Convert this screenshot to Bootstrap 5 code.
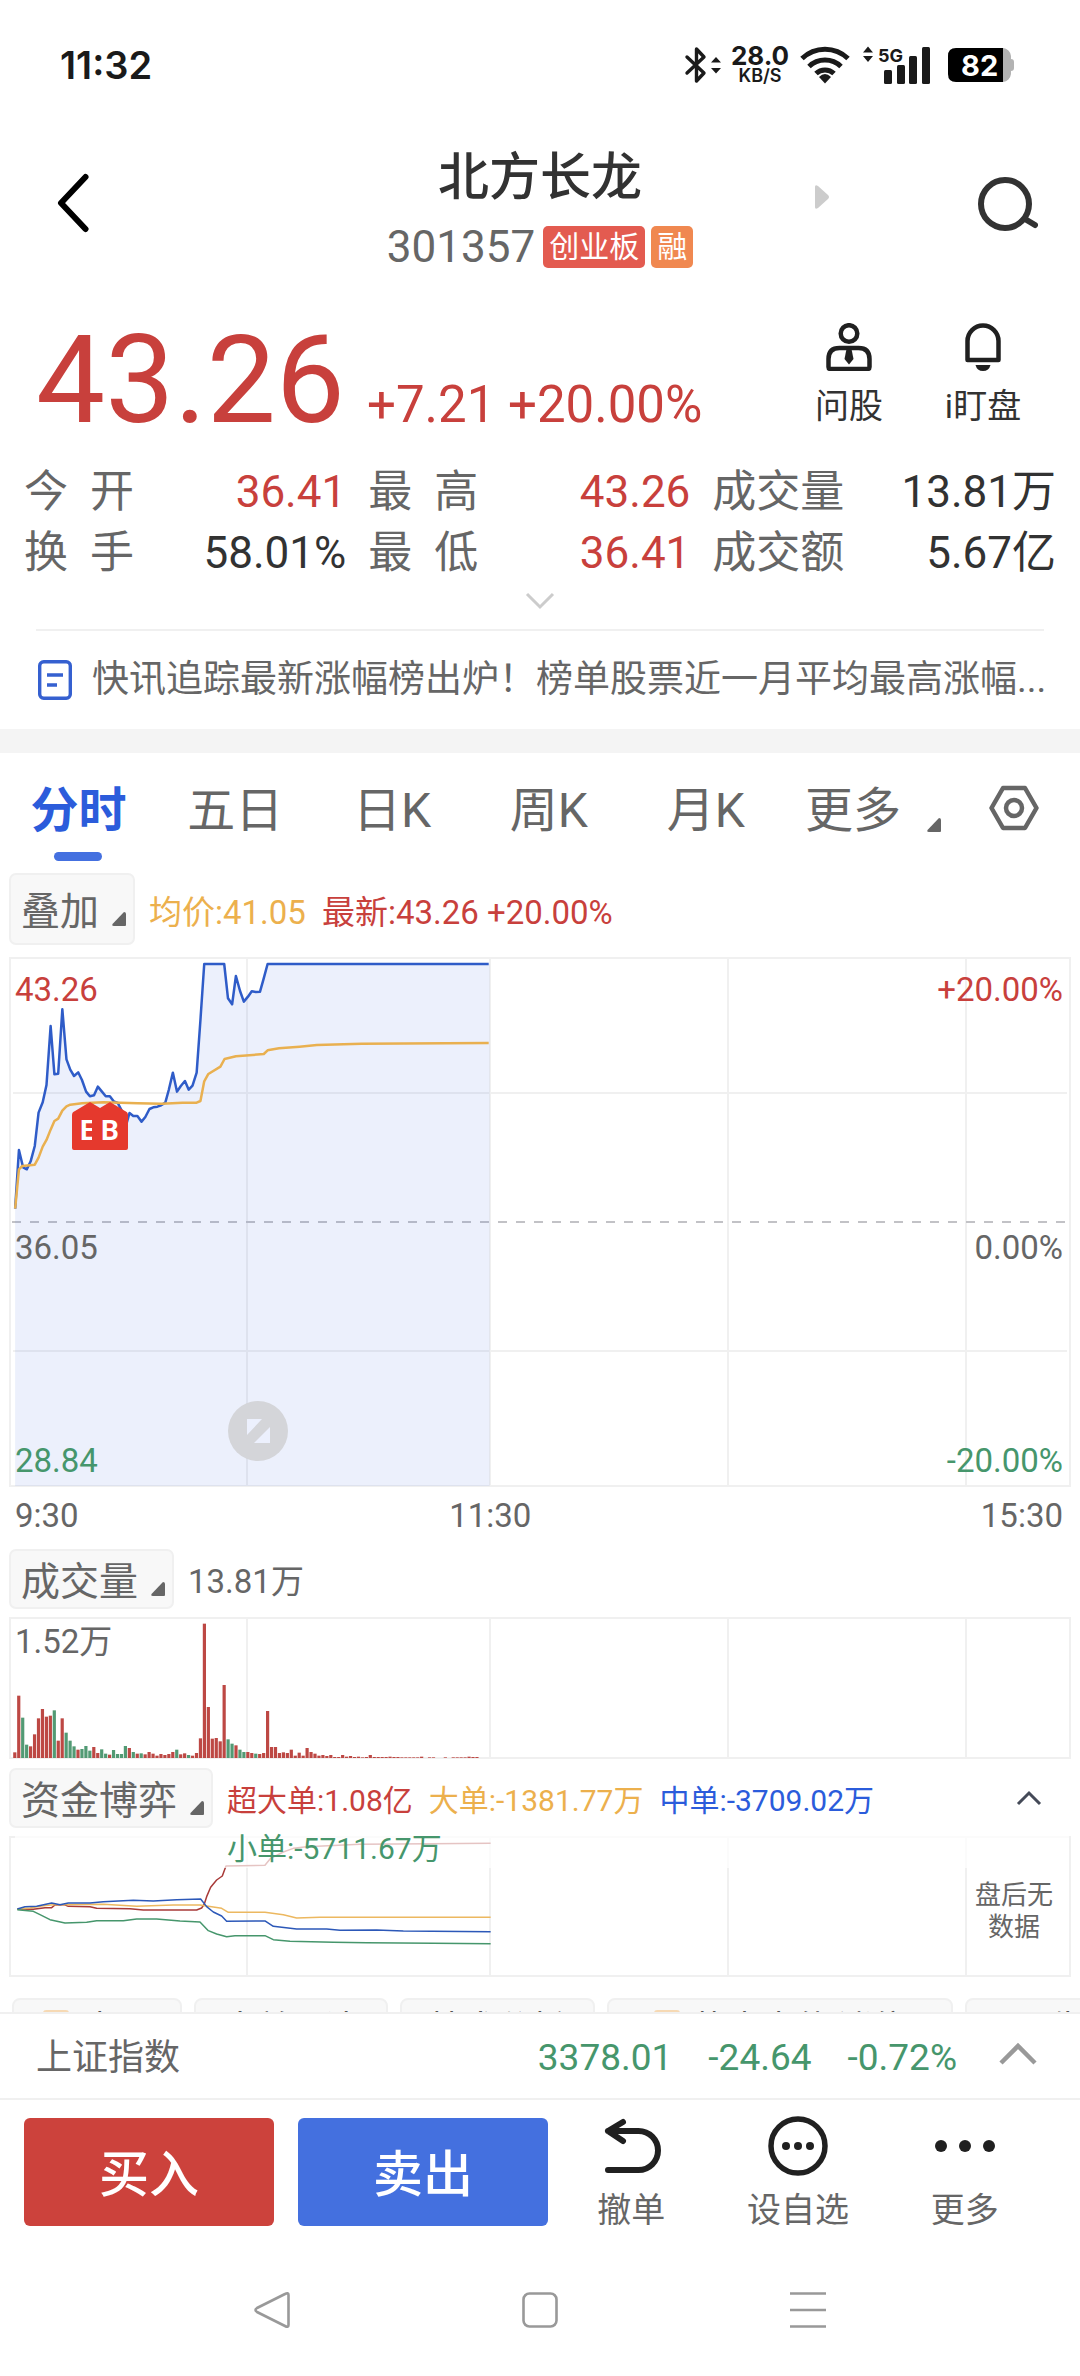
<!DOCTYPE html>
<html lang="zh-CN">
<head>
<meta charset="utf-8">
<meta name="viewport" content="width=device-width, initial-scale=1">
<title>北方长龙 301357</title>
<link href="https://cdn.jsdelivr.net/npm/bootstrap@5.3.0/dist/css/bootstrap.min.css" rel="stylesheet">
<style>
:root{--up:#c8403c;--down:#46966c;--blue:#2b5cdb;--avg:#ecb04d;--txt:#323232;--sub:#666;--line:#f0f0f0}
body{font-family:Roboto,"Noto Sans CJK SC",sans-serif;color:var(--txt);background:#fff;overflow-x:hidden}
button{background:none;border:0;padding:0;color:inherit;font-family:inherit}
a{color:inherit;text-decoration:none}
svg{display:block;flex:none}
.status{height:130px;padding:0 66px 0 60px;font-family:Inter,Roboto,sans-serif;color:#1a1a1a}
.clock{font-size:38px;font-weight:600;line-height:40px}
.rate{font-size:26px;line-height:22px;font-weight:700;width:60px}
.rate small{font-size:18px;line-height:18px;font-weight:600;display:block}
.batt{width:66px;height:34px}
.batt span{font-size:29px;line-height:34px;font-weight:700;color:#fff;left:13px;top:1px}
.topbar{display:grid;grid-template-columns:1fr auto 1fr;align-items:center;padding:18px 0 16px}
.side-start{padding:0 0 6px 56px}
.side-end{padding:0 42px 10px 122px}
.side-end .next{margin-bottom:14px}
.stock-name{font-size:51px;line-height:60px;margin:0 0 16px;font-weight:500}
.code{font-size:44px;line-height:46px}
.tagbox{font-size:30px;line-height:42px;height:42px;padding:0 6px;border-radius:5px;color:#fff;background:#e35b50}
.tagbox.fin{background:#f08850;margin-left:6px}
.quote{padding:34px 30px 0 36px;min-height:176px}
.price{font-size:123px;line-height:120px}
.chg{font-size:51px;line-height:60px;margin-left:22px}
.tool{width:134px;font-size:34px;line-height:46px;padding-top:3px}
.tool svg{margin-bottom:12px}
.stats{display:grid;grid-template-columns:15fr 15fr 16fr;column-gap:22px;padding:0 24px;font-size:44px;line-height:61px;margin:0}
.stats dt{font-weight:400;color:var(--sub);width:110px;white-space:nowrap}
.stats dt.wide{width:132px}
.stats dd{margin:0}
.more-row{height:45px;padding-top:8px}
.news{margin:0 36px;border-top:2px solid var(--line);height:100px;font-size:37px;color:var(--sub);gap:20px;padding-left:2px}
.band{height:24px;background:#f4f4f4}
.tabs{height:114px}
.tabs .tab{flex:158 1 0;font-size:48px;line-height:60px;padding-top:28px;color:var(--sub);position:relative}
.tabs .tab.on{color:var(--blue);font-weight:700}
.tabs .tab.on::after{content:"";position:absolute;left:50%;margin-left:-24px;bottom:6px;width:48px;height:9px;border-radius:5px;background:#4470e0}
.tabs .tab svg{margin:37px 0 0 26px}
.tabs .set{flex:132 1 0;padding-top:32px}
.pane{padding:0 9px}
.pick{font-size:39px;line-height:50px;color:var(--sub);background:#f8f8f8;border:2px solid #f0f0f0;border-radius:7px;padding:6px 7px 0 10px;margin-right:14px;white-space:nowrap}
.pick.tall{padding-top:12px;padding-bottom:6px}
.pick svg{margin:14px 0 0 13px}
.info{font-size:33px;line-height:40px}
.info.drop,.legend-s{padding-top:6px}
.legend-s{font-size:30px;line-height:40px;gap:16px}
.plot{position:relative}
.plot svg.draw{width:100%}
.lab{position:absolute;font-size:33px;line-height:40px;color:var(--sub);left:6px}
.lab.end{left:auto;right:8px}
.up{color:var(--up)}.down{color:var(--down)}.sub{color:var(--sub)}.avg{color:var(--avg)}.blue{color:var(--blue)}
.t1{top:13px}.t2{top:271px}.t3{top:484px}
.trade-pin{position:absolute;left:63px;top:145px}
.full{position:absolute;left:219px;top:444px}
.grid-l{stroke:#f0f0f0;stroke-width:2;fill:none}
.ln{fill:none;stroke-width:2.5;vector-effect:non-scaling-stroke;stroke-linejoin:round}
.ln.fine{stroke-width:1.5}
.veil{position:absolute;left:6px;right:2px;top:0;height:32px;background:rgba(255,255,255,.7)}
.veil span{position:absolute;left:212px;top:-7px;font-size:30px;line-height:40px}
.after-h{position:absolute;right:0;width:114px;top:43px;font-size:26px;line-height:32px;color:var(--sub);padding:0 18px}
.chips{height:14px;overflow:hidden;padding-left:12px;gap:12px}
.chip{flex:none;border:2px solid #f0f0f0;background:#f8f8f8;border-radius:8px;height:64px;font-size:34px;line-height:56px;color:#555}
.chip svg{display:inline-block;vertical-align:top;margin:10px 14px 0 0}
.index{border-top:2px solid var(--line);border-bottom:2px solid var(--line);height:88px;padding:4px 43px 0 36px;font-size:36px}
.index .nums{gap:36px;font-size:37px}
.trade{padding:18px 32px 0 24px;height:128px}
.deal{width:250px;height:108px;border-radius:6px;color:#fff;font-size:50px;line-height:102px;padding-top:6px;background:#cc423c;font-weight:500}
.deal.sell{background:#4470df;margin-left:24px}
.act{flex:1 1 0;font-size:34px;line-height:40px;color:var(--sub)}
.act svg{margin:-2px 0 14px}
.sysnav{padding:63px 138px 44px}
.sysnav button{flex:1 1 0}
</style>
<script src="https://cdn.jsdelivr.net/npm/bootstrap@5.3.0/dist/js/bootstrap.bundle.min.js"></script>
</head>
<body>
<div class="status d-flex align-items-center justify-content-between">
  <div class="clock">11:32</div>
  <div class="d-flex align-items-center">
    <svg width="38" height="38" viewBox="0 0 38 38" fill="none" stroke="#1a1a1a" stroke-width="3.400" stroke-linejoin="round" stroke-linecap="round"><path d="M3 11L20 27L12.500 35V3L20 11L3 27"/><path d="M27 16.500L32 11L37 16.500ZM27 22L32 27.500L37 22Z" fill="#1a1a1a" stroke="none"/></svg>
    <div class="rate text-center ms-2">28.0<small>KB/S</small></div>
    <svg class="ms-2" width="54" height="38" viewBox="0 0 54 38" fill="none" stroke="#1a1a1a" stroke-width="5"><path d="M4 12.500A33 33 0 0 1 50 12.500M11 20.500A23 23 0 0 1 43 20.500M18 27.500A13 13 0 0 1 36 27.500"/><path d="M21 31Q27 25 33 31L27 37.500Z" fill="#1a1a1a" stroke="none"/></svg>
    <svg class="ms-2" width="72" height="38" viewBox="0 0 72 38" fill="#1a1a1a"><path d="M3 6.500L8 .5L13 6.500ZM3 10L8 16L13 10Z"/><text x="18" y="15.500" font-family="Inter" font-size="18" font-weight="700">5G</text><rect x="24" y="24" width="8" height="14" rx="1.500"/><rect x="37" y="19" width="8" height="19" rx="1.500"/><rect x="49" y="10" width="8" height="28" rx="1.500"/><rect x="62" y="1" width="8" height="37" rx="1.500"/></svg>
    <div class="batt position-relative ms-3">
      <svg width="66" height="34" viewBox="0 0 66 34"><path d="M55 0A9 9 0 0 1 63 8V11Q66 11 66 14V20Q66 23 63 23V26A9 9 0 0 1 55 34Z" fill="#b3b3b3"/><path d="M55 0H8Q0 0 0 8V26Q0 34 8 34H55Z"/></svg>
      <span class="position-absolute">82</span>
    </div>
  </div>
</div>

<header class="topbar">
  <div class="side-start"><button type="button" aria-label="返回"><svg width="34" height="60" viewBox="0 0 34 60" fill="none" stroke="#000" stroke-width="6" stroke-linecap="round" stroke-linejoin="round"><path d="M29.500 4L5 30L29.500 56"/></svg></button></div>
  <div class="text-center">
    <h1 class="stock-name">北方长龙</h1>
    <div class="d-flex align-items-center"><span class="code sub me-1">301357</span><span class="tagbox ms-1">创业板</span><span class="tagbox fin">融</span></div>
  </div>
  <div class="side-end d-flex align-items-center justify-content-between">
    <svg class="next" width="14" height="24" viewBox="0 0 14 24" fill="#ccc"><path d="M0 2Q0 -1 3 1L13 10Q15 12 13 14L3 23Q0 25 0 22Z"/></svg>
    <button type="button" aria-label="搜索"><svg width="60" height="56" viewBox="0 0 60 56" fill="none" stroke="#323232" stroke-width="6"><circle cx="27" cy="28" r="24"/><path d="M47 43L57 49" stroke-linecap="round"/></svg></button>
  </div>
</header>

<section class="quote d-flex justify-content-between">
  <div class="d-flex align-items-baseline up"><span class="price">43.26</span><span class="chg">+7.21 +20.00%</span></div>
  <div class="d-flex">
    <button type="button" class="tool d-flex flex-column align-items-center"><svg width="46" height="48" viewBox="0 0 46 48" fill="none" stroke="#202020" stroke-width="4.500"><circle cx="23" cy="10.500" r="8.300"/><path d="M2.500 44V36Q2.500 25 13.500 25H32.500Q43.500 25 43.500 36V44Q43.500 46 41.500 46H4.500Q2.500 46 2.500 44Z" stroke-linejoin="round"/><path d="M20.500 26H25.500L27.500 36L23 41.500L18.500 36Z" fill="#202020" stroke="none"/></svg>问股</button>
    <button type="button" class="tool d-flex flex-column align-items-center"><svg width="46" height="48" viewBox="0 0 46 48" fill="none" stroke="#202020" stroke-width="4.500"><path d="M7.500 37V18A15.500 15.500 0 0 1 38.500 18V37Z" stroke-linejoin="round"/><path d="M15.500 42H30.500Q29 48 23 48Q17 48 15.500 42Z" fill="#202020" stroke="none"/></svg>i盯盘</button>
  </div>
</section>

<dl class="stats">
  <div class="d-flex justify-content-between"><dt class="d-flex justify-content-between"><span>今</span><span>开</span></dt><dd class="up">36.41</dd></div>
  <div class="d-flex justify-content-between"><dt class="d-flex justify-content-between"><span>最</span><span>高</span></dt><dd class="up">43.26</dd></div>
  <div class="d-flex justify-content-between"><dt class="wide">成交量</dt><dd>13.81万</dd></div>
  <div class="d-flex justify-content-between"><dt class="d-flex justify-content-between"><span>换</span><span>手</span></dt><dd>58.01%</dd></div>
  <div class="d-flex justify-content-between"><dt class="d-flex justify-content-between"><span>最</span><span>低</span></dt><dd class="up">36.41</dd></div>
  <div class="d-flex justify-content-between"><dt class="wide">成交额</dt><dd>5.67亿</dd></div>
</dl>
<div class="more-row d-flex justify-content-center"><button type="button" class="d-flex" aria-label="展开"><svg width="30" height="18" viewBox="0 0 30 18" fill="none" stroke="#ccc" stroke-width="3"><path d="M2 2L15 15L28 2"/></svg></button></div>

<a href="#" class="news d-flex align-items-center"><svg width="34" height="40" viewBox="0 0 34 40" fill="none" stroke="#3560d0" stroke-width="3.400"><rect x="1.700" y="1.700" width="30.600" height="36.600" rx="4"/><path d="M9 15H25M9 25H19"/></svg><span class="text-nowrap">快讯追踪最新涨幅榜出炉！榜单股票近一月平均最高涨幅...</span></a>
<div class="band"></div>

<nav class="tabs d-flex">
  <a href="#" class="tab on text-center">分时</a>
  <a href="#" class="tab text-center">五日</a>
  <a href="#" class="tab text-center">日K</a>
  <a href="#" class="tab text-center">周K</a>
  <a href="#" class="tab text-center">月K</a>
  <a href="#" class="tab d-flex justify-content-end align-items-start pe-2">更多<svg width="14" height="14" viewBox="0 0 14 14" fill="#666"><path d="M12 0Q14 0 14 2V13Q14 14 13 14H2Q-1 14 1 11.500Z"/></svg></a>
  <button type="button" class="set d-flex justify-content-center align-items-start" aria-label="设置"><svg width="50" height="46" viewBox="0 0 50 46" fill="none" stroke="#666" stroke-width="4.500" stroke-linejoin="round"><path d="M14 3H36L47.500 23L36 43H14L2.500 23Z"/><circle cx="25" cy="23" r="8"/></svg></button>
</nav>

<div class="pane d-flex align-items-center" style="padding-top:6px">
  <button type="button" class="pick tall d-flex align-items-center">叠加<svg width="14" height="14" viewBox="0 0 14 14" fill="#666"><path d="M12 0Q14 0 14 2V13Q14 14 13 14H2Q-1 14 1 11.500Z"/></svg></button>
  <div class="info d-flex pt-2" style="gap:16px"><span class="avg">均价:41.05</span><span class="up">最新:43.26 +20.00%</span></div>
</div>

<div class="pane" style="padding-top:12px">
  <div class="plot">
    <svg class="draw" height="530" viewBox="0 0 1062 530" preserveAspectRatio="none">
      <g class="grid-l"><rect x="1" y="1" width="1060" height="528"/><path d="M238 1V529M481 1V529M719 1V529M957 1V529M4 136H1058M4 394H1058"/></g>
      <path d="M3 265H1058" stroke="#c2c2c6" stroke-width="2" stroke-dasharray="9 9"/>
      <g transform="translate(-9 -17) scale(.3444 .3333)">
        <path fill="#4470e0" fill-opacity=".1" d="M44,806 55,630 67,682 78,688 89,664 101,618 112,518 124,487 135,435 147,258 158,403 169,401 181,208 193,358 204,389 215,408 227,397 238,420 250,455 261,469 273,466 284,440 296,455 307,469 319,469 330,484 342,489 353,511 365,560 376,519 387,528 399,528 411,545 422,531 434,507 445,502 457,500 468,496 480,488 490,450 502,398 514,455 525,438 537,423 548,449 559,437 571,398 582,240 593,72 651,72 662,175 674,193 685,108 697,153 708,185 720,170 731,154 743,156 755,155 765,118 777,72 1422,72 V1638H44Z"/>
        <polyline class="ln" stroke="#2f5cc8" points="44,806 55,630 67,682 78,688 89,664 101,618 112,518 124,487 135,435 147,258 158,403 169,401 181,208 193,358 204,389 215,408 227,397 238,420 250,455 261,469 273,466 284,440 296,455 307,469 319,469 330,484 342,489 353,511 365,560 376,519 387,528 399,528 411,545 422,531 434,507 445,502 457,500 468,496 480,488 490,450 502,398 514,455 525,438 537,423 548,449 559,437 571,398 582,240 593,72 651,72 662,175 674,193 685,108 697,153 708,185 720,170 731,154 743,156 755,155 765,118 777,72 1419,72"/>
        <polyline class="ln" stroke="#e9b050" points="44,806 55,688 65,678 101,674 112,653 124,620 135,600 147,569 158,543 169,536 181,512 193,499 204,494 238,490 300,487 400,490 470,491 530,488 571,488 582,483 593,424 605,402 640,380 652,357 685,349 766,342 777,331 810,325 870,320 920,315 1050,311 1419,309"/>
      </g>
    </svg>
    <svg class="trade-pin" width="56" height="50" viewBox="0 0 56 50"><path d="M0 13Q0 10 3 9L18 0L28 6L38 0L53 9Q56 10 56 13V46Q56 48 54 48H2Q0 48 0 46Z" fill="#e5392d"/><g fill="#fff" font-family="Roboto" font-weight="700" font-size="28"><text x="8" y="38">E</text><path d="M20 14H29V42H20Z" fill="#e5392d"/><text x="29" y="38">B</text></g></svg>
    <span class="lab t1 up">43.26</span><span class="lab end t1 up">+20.00%</span>
    <span class="lab t2">36.05</span><span class="lab end t2">0.00%</span>
    <span class="lab t3 down">28.84</span><span class="lab end t3 down">-20.00%</span>
    <button type="button" class="full" aria-label="全屏"><svg width="60" height="60" viewBox="0 0 60 60"><circle cx="30" cy="30" r="30" fill="#d4d5d9"/><path d="M19 18H34L19 34ZM42 26V42H26Z" fill="#ecf0fd"/></svg></button>
  </div>
  <div class="info sub d-flex justify-content-between" style="padding:9px 8px 0 6px"><span>9:30</span><span style="margin-right:79px">11:30</span><span>15:30</span></div>
</div>

<div class="pane d-flex align-items-center" style="padding-top:13px">
  <button type="button" class="pick d-flex align-items-center">成交量<svg width="14" height="14" viewBox="0 0 14 14" fill="#666"><path d="M12 0Q14 0 14 2V13Q14 14 13 14H2Q-1 14 1 11.500Z"/></svg></button>
  <span class="info drop sub">13.81万</span>
</div>
<div class="pane" style="padding-top:8px">
  <div class="plot">
    <svg class="draw" height="142" viewBox="0 0 1062 142" preserveAspectRatio="none">
      <g class="grid-l"><rect x="1" y="1" width="1060" height="140"/><path d="M238 1V141M481 1V141M719 1V141M957 1V141"/></g>
      <g id="volume"></g>
    </svg>
    <span class="lab" style="top:5px">1.52万</span>
  </div>
</div>

<div class="pane d-flex align-items-center" style="padding-top:9px">
  <button type="button" class="pick d-flex align-items-center">资金博弈<svg width="14" height="14" viewBox="0 0 14 14" fill="#666"><path d="M12 0Q14 0 14 2V13Q14 14 13 14H2Q-1 14 1 11.500Z"/></svg></button>
  <div class="legend-s d-flex"><span class="up">超大单:1.08亿</span><span class="avg">大单:-1381.77万</span><span class="blue">中单:-3709.02万</span></div>
  <button type="button" class="ms-auto" style="margin-right:29px" aria-label="收起"><svg width="26" height="16" viewBox="0 0 26 16" fill="none" stroke="#444a58" stroke-width="3"><path d="M2 14L13 3L24 14"/></svg></button>
</div>
<div class="pane" style="padding-top:8px">
  <div class="plot">
    <svg class="draw" height="141" viewBox="0 0 1062 141" preserveAspectRatio="none">
      <g class="grid-l"><rect x="1" y="1" width="1060" height="139"/><path d="M238 1V140M481 1V140M719 1V140M957 1V140"/></g>
      <g transform="translate(-9 -6) scale(.3333)">
        <polyline class="ln fine" stroke="#a83a38" points="52,237 100,238 135,233 155,233 165,225 192,224 205,229 270,230 290,235 390,236 430,240 590,240 605,234 613,222 620,200 632,172 650,150 667,138 678,108 795,106 812,85 850,66 880,55 920,50 1080,43 1290,41 1472,40"/>
        <polyline class="ln fine" stroke="#ecb860" points="52,237 90,234 130,227 160,224 310,223 410,229 520,225 600,225 665,235 685,247 795,247 850,254 890,264 960,262 1472,262"/>
        <polyline class="ln fine" stroke="#2c58b8" points="52,237 75,230 110,229 155,219 180,224 205,219 270,219 310,215 400,211 460,213 530,209 602,207 620,230 640,246 665,258 680,274 795,273 820,289 890,297 980,297 1020,301 1130,300 1210,303 1472,305"/>
        <polyline class="ln fine" stroke="#46966c" points="52,239 100,244 120,254 150,269 195,279 260,277 290,272 370,272 410,267 470,267 540,273 600,276 625,302 650,312 680,320 705,317 795,317 820,329 870,334 1000,337 1100,338 1300,340 1472,341"/>
      </g>
    </svg>
    <div class="veil"><span class="down text-nowrap">小单:-5711.67万</span></div>
    <div class="after-h text-center">盘后无数据</div>
  </div>
</div>

<div style="padding-top:21px">
  <div class="chips d-flex text-center">
    <div class="chip" style="width:170px"><svg width="26" height="30"><rect width="26" height="30" rx="3" fill="#f6d9b4"/></svg>点评</div>
    <div class="chip" style="width:194px">大单雷达</div>
    <div class="chip" style="width:195px">技术分析</div>
    <div class="chip" style="width:346px"><svg width="26" height="30"><rect width="26" height="30" rx="3" fill="#f6d9b4"/></svg>热点事件 涨停</div>
    <div class="chip" style="width:170px">公告</div>
  </div>
</div>

<div class="index d-flex align-items-center">
  <span class="sub me-auto">上证指数</span>
  <span class="nums down d-flex"><span>3378.01</span><span>-24.64</span><span>-0.72%</span></span>
  <button type="button" class="pb-2" style="margin-left:42px" aria-label="展开指数"><svg width="38" height="24" viewBox="0 0 38 24" fill="none" stroke="#999" stroke-width="4.500"><path d="M2 21L19 4L36 21"/></svg></button>
</div>

<div class="trade d-flex align-items-start">
  <button type="button" class="deal">买入</button>
  <button type="button" class="deal sell">卖出</button>
  <div class="d-flex flex-fill">
    <button type="button" class="act d-flex flex-column align-items-center"><svg width="60" height="60" viewBox="0 0 60 60" fill="none" stroke="#202020" stroke-width="6" stroke-linecap="round" stroke-linejoin="round"><path d="M22 6L7 15L22 25M7 15H37.500A19.500 19.500 0 0 1 37.500 54H7"/></svg>撤单</button>
    <button type="button" class="act d-flex flex-column align-items-center"><svg width="60" height="60" viewBox="0 0 60 60" fill="none" stroke="#202020" stroke-width="5.500"><circle cx="30" cy="30" r="27"/><g fill="#202020" stroke="none"><circle cx="18" cy="30" r="4"/><circle cx="30" cy="30" r="4"/><circle cx="42" cy="30" r="4"/></g></svg>设自选</button>
    <button type="button" class="act d-flex flex-column align-items-center"><svg width="60" height="60" viewBox="0 0 60 60" fill="#202020"><circle cx="6" cy="30" r="6"/><circle cx="30" cy="30" r="6"/><circle cx="54" cy="30" r="6"/></svg>更多</button>
  </div>
</div>

<div class="sysnav d-flex">
  <button type="button" class="d-flex justify-content-center" aria-label="系统返回"><svg width="38" height="38" viewBox="0 0 38 38" fill="none" stroke="#999" stroke-width="2.600" stroke-linejoin="round"><path d="M32 3Q35.500 1 35.500 4V34Q35.500 37 32 35L4 21Q1 19 4 17Z"/></svg></button>
  <button type="button" class="d-flex justify-content-center" aria-label="主屏幕"><svg width="38" height="38" viewBox="0 0 38 38" fill="none" stroke="#999" stroke-width="2.600"><rect x="2.500" y="2.500" width="33" height="33" rx="6"/></svg></button>
  <button type="button" class="d-flex justify-content-center" aria-label="最近任务"><svg width="38" height="38" viewBox="0 0 38 38" stroke="#999" stroke-width="2.600"><path d="M1 2.500H37M1 19H37M1 35.500H37"/></svg></button>
</div>

<script>
// Minute volume from 9:30; a minus sign marks a falling minute.
const vol=[17,187,-121,-40,35,71,119,147,124,127,-143,52,119,-76,-52,-35,25,-27,-36,-22,33,15,-26,-13,10,-24,-12,-12,-36,30,-18,13,-14,11,18,13,7,12,9,12,18,-25,11,14,-9,7,15,59,403,153,58,60,50,219,-56,-43,38,-25,-18,18,15,-13,12,15,141,33,33,15,17,15,25,7,16,7,30,18,13,7,9,6,9,3,3,9,4,6,3,4,2,3,9,3,3,3,3,4,3,3,2,2,2,2,2,4,0,2,2,0,0,2,0,2,2,2,2,4,3,3];
const layer=document.getElementById('volume');
vol.forEach((v,i)=>{
  const h=Math.abs(v)/3,r=document.createElementNS('http://www.w3.org/2000/svg','rect');
  r.setAttribute('x',4.2+i*3.95);r.setAttribute('y',141-h);
  r.setAttribute('width',3.2);r.setAttribute('height',h);
  r.setAttribute('fill',v<0?'#529a74':'#bd4844');
  layer.appendChild(r);
});
</script>
</body>
</html>
